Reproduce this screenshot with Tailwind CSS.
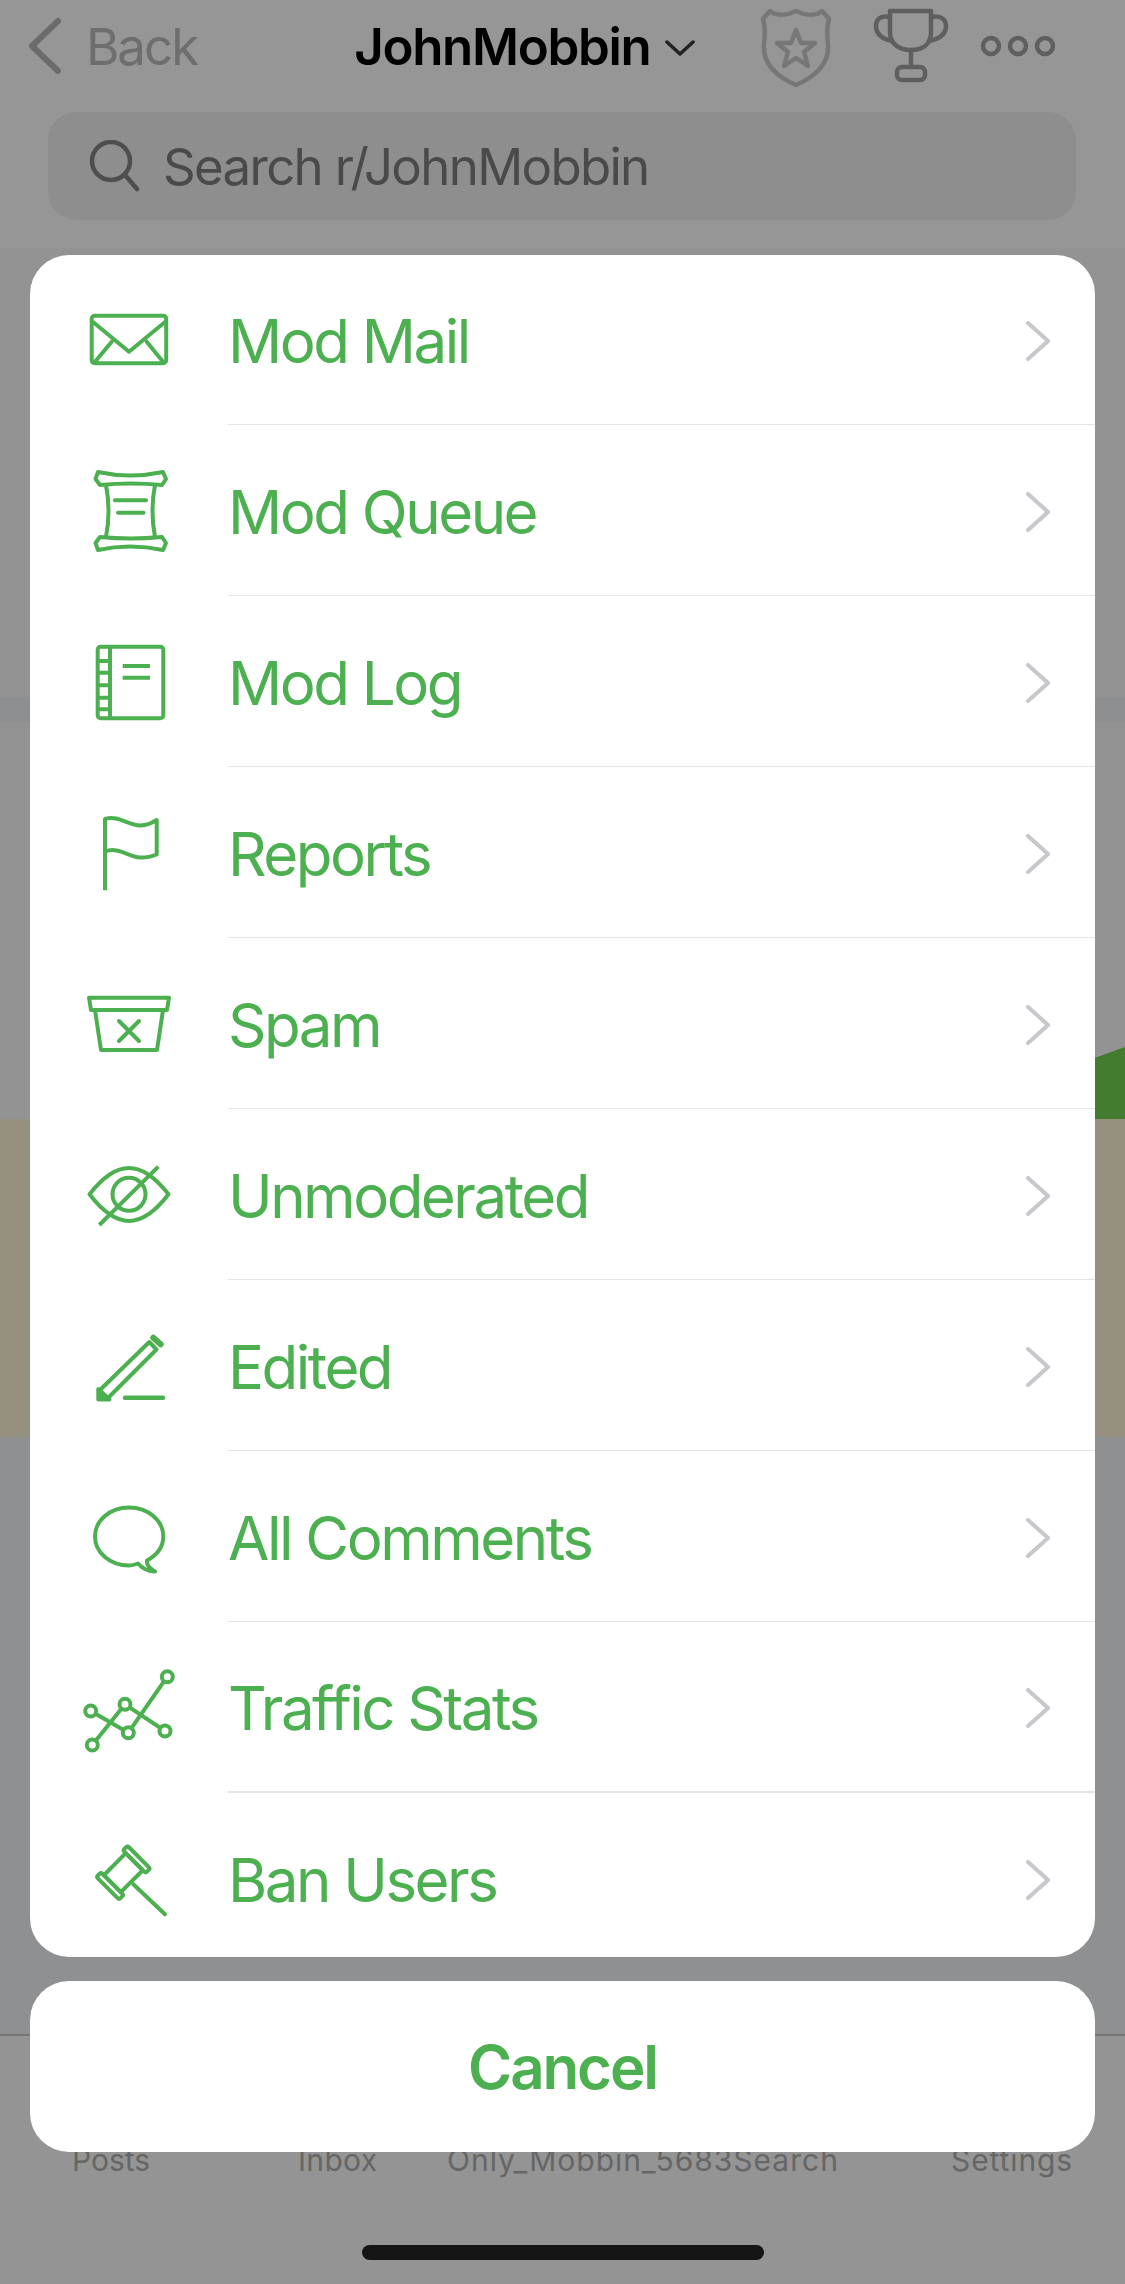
<!DOCTYPE html>
<html lang="en">
<head>
    <meta charset="UTF-8">
    <meta name="viewport" content="width=device-width, initial-scale=1.0">
    <title>JohnMobbin</title>
    <script src="https://cdn.jsdelivr.net/npm/@tailwindcss/browser@4"></script>
</head>
<body class="relative w-[1125px] h-[2284px] overflow-hidden bg-[#949494] font-['Inter','Liberation_Sans',sans-serif]">

    <!-- dimmed page behind the sheet -->
    <header class="h-[248px] bg-[#969696]">
        <div class="flex items-center h-[92px]">
            <svg class="ml-[25px] w-[38px] h-[60px]" viewBox="0 0 38 60" fill="none" stroke="#6b6b6b" stroke-width="6" stroke-linecap="round" stroke-linejoin="round">
                <path d="M33 5 L7 30 L33 55"/>
            </svg>
            <span class="ml-[23px] text-[51px] leading-none tracking-[-2px] text-[#6e6e6e]">Back</span>
            <span class="ml-[157px] text-[51px] leading-none font-semibold tracking-[-1.3px] text-black">JohnMobbin</span>
            <svg class="ml-[15px] mt-[4px] w-[30px] h-[16px]" viewBox="0 0 30 16" fill="none" stroke="#222" stroke-width="3.5" stroke-linecap="round" stroke-linejoin="round">
                <path d="M2 2 L15 14 L28 2"/>
            </svg>
            <svg class="ml-[65px] mt-[3px] w-[72px] h-[80px]" viewBox="0 0 72 80" fill="none" stroke="#777" stroke-width="4.5" stroke-linejoin="round">
                <path d="M10 3 C16 8 25 8 36 3 C47 8 56 8 62 3 L69 11 C66 20 67 28 68 36 C70 58 52 70 36 77 C20 70 2 58 4 36 C5 28 6 20 3 11 Z"/>
                <path d="M36 22 L41 35 L55 35 L44 44 L48 58 L36 50 L24 58 L28 44 L17 35 L31 35 Z"/>
            </svg>
            <svg class="ml-[41px] w-[76px] h-[76px]" viewBox="0 0 76 76" fill="none" stroke="#5f5f5f" stroke-width="4.5" stroke-linecap="round" stroke-linejoin="round">
                <path d="M17 3 H58 V24 C58 36 50 42 38 42 C26 42 17 36 17 24 Z"/>
                <path d="M17 9 C8 7 3 11 3 18 C3 27 10 31 19 33"/>
                <path d="M58 9 C67 7 73 11 73 18 C73 27 66 31 56 33"/>
                <path d="M38 42 V58"/>
                <rect x="24" y="59" width="28" height="13" rx="5"/>
            </svg>
            <svg class="ml-[31px] w-[76px] h-[24px]" viewBox="0 0 76 24" fill="none" stroke="#5f5f5f" stroke-width="4.5">
                <circle cx="11" cy="12" r="8"/>
                <circle cx="38" cy="12" r="8"/>
                <circle cx="65" cy="12" r="8"/>
            </svg>
        </div>
        <div class="flex items-center mt-[20px] ml-[48px] w-[1028px] h-[108px] rounded-[28px] bg-[#8e8e8e]">
            <svg class="ml-[41px] w-[52px] h-[52px]" viewBox="0 0 52 52" fill="none" stroke="#4e4e4e" stroke-width="4.5" stroke-linecap="round">
                <circle cx="22" cy="21" r="19"/>
                <path d="M36 35 L48 49"/>
            </svg>
            <span class="ml-[22px] text-[51px] leading-none tracking-[-1.7px] text-[#4a4a4a]">Search r/JohnMobbin</span>
        </div>
    </header>

    <section class="h-[449px] bg-[#939393]"></section>
    <div class="h-[25px] bg-[#8d8f90]"></div>
    <section class="relative h-[397px] bg-[#939393]">
        <div class="absolute right-0 bottom-0 w-[200px] h-[100px] bg-[#437c2f] [clip-path:polygon(100%_28%,0_100%,100%_100%)]"></div>
    </section>
    <section class="h-[318px] bg-[#96917f]"></section>
    <section class="h-[597px] bg-[#8e9091]"></section>

    <footer class="h-[250px] border-t-2 border-[#777] bg-[#949494]">
        <div class="relative flex pt-[106px] text-[30px] leading-[36px] text-[#666]">
            <span class="ml-[72px] w-[226px]">Posts</span>
            <span class="w-[149px] tracking-[0.3px]">Inbox</span>
            <span class="w-[504px] tracking-[1px]">Only_Mobbin_5683Search</span>
            <span class="tracking-[0.9px]">Settings</span>
        </div>
    </footer>

    <!-- home indicator -->
    <div class="absolute left-[362px] top-[2245px] w-[402px] h-[15px] rounded-full bg-[#141414]"></div>

    <!-- action sheet -->
    <div class="absolute inset-0 flex flex-col gap-[24px] px-[30px] pt-[255px]">
        <div class="h-[1702px] rounded-[39px] bg-white overflow-hidden text-[60px] leading-none tracking-[-2.5px] text-[#4caf50]">

            <div class="flex h-[170px]">
                <svg class="ml-[50px] mr-[48px] self-center w-[100px] h-[100px]" viewBox="0 0 100 100" fill="none" stroke="#4caf50" stroke-width="4" stroke-linecap="round" stroke-linejoin="round">
                    <rect x="11.7" y="25.7" width="74.5" height="47.5" rx="3"/>
                    <path d="M13 32 L49 61.7 L85 32"/>
                    <path d="M31.7 51.7 L15 71.7"/>
                    <path d="M66.7 51.7 L83 71.7"/>
                </svg>
                <div class="flex flex-1 items-center justify-between pt-[3px] pr-[45px] border-b border-[#e4e4e6]">
                    <span>Mod Mail</span>
                    <svg class="w-[24px] h-[40px]" viewBox="0 0 24 40" fill="none" stroke="#c7c7cc" stroke-width="4" stroke-linecap="round"><path d="M2 2 L22 20 L2 38"/></svg>
                </div>
            </div>

            <div class="flex h-[171px]">
                <svg class="ml-[50px] mr-[48px] self-center w-[100px] h-[100px]" viewBox="0 0 100 100" fill="none" stroke="#4caf50" stroke-width="4" stroke-linecap="round" stroke-linejoin="round">
                    <path d="M18 11 Q50 18 83 11 L86 18 L82 24 Q50 21 20 24 L15.5 18 Z"/>
                    <path d="M18 89 Q50 82 83 89 L86 82 L82 76 Q50 79 20 76 L15.5 82 Z"/>
                    <path d="M26 24 Q31 50 26 76"/>
                    <path d="M75 24 Q70 50 75 76"/>
                    <path d="M35 39.3 H66"/>
                    <path d="M38 51.7 H63.5"/>
                </svg>
                <div class="flex flex-1 items-center justify-between pt-[3px] pr-[45px] border-b border-[#e4e4e6]">
                    <span>Mod Queue</span>
                    <svg class="w-[24px] h-[40px]" viewBox="0 0 24 40" fill="none" stroke="#c7c7cc" stroke-width="4" stroke-linecap="round"><path d="M2 2 L22 20 L2 38"/></svg>
                </div>
            </div>

            <div class="flex h-[171px]">
                <svg class="ml-[50px] mr-[48px] self-center w-[100px] h-[100px]" viewBox="0 0 100 100" fill="none" stroke="#4caf50" stroke-width="4" stroke-linejoin="round">
                    <rect x="17.7" y="14.7" width="65.6" height="71.6" rx="3"/>
                    <path d="M30 14.7 V86.3"/>
                    <path d="M18 29 H30 M18 40.7 H30 M18 53.3 H30 M18 65.7 H30 M18 77.3 H30"/>
                    <path d="M42.7 34 H70 M42.7 45.7 H70"/>
                </svg>
                <div class="flex flex-1 items-center justify-between pt-[3px] pr-[45px] border-b border-[#e4e4e6]">
                    <span>Mod Log</span>
                    <svg class="w-[24px] h-[40px]" viewBox="0 0 24 40" fill="none" stroke="#c7c7cc" stroke-width="4" stroke-linecap="round"><path d="M2 2 L22 20 L2 38"/></svg>
                </div>
            </div>

            <div class="flex h-[171px]">
                <svg class="ml-[50px] mr-[48px] self-center w-[100px] h-[100px]" viewBox="0 0 100 100" fill="none" stroke="#4caf50" stroke-width="4" stroke-linejoin="round">
                    <path d="M25 87.3 V16 C38 12 48 22 60 22.5 C66 22.5 72 20 76.7 17 V51.5 C70 54 66 55 60 54.5 C48 53.5 38 43.5 25 48.5"/>
                </svg>
                <div class="flex flex-1 items-center justify-between pt-[3px] pr-[45px] border-b border-[#e4e4e6]">
                    <span>Reports</span>
                    <svg class="w-[24px] h-[40px]" viewBox="0 0 24 40" fill="none" stroke="#c7c7cc" stroke-width="4" stroke-linecap="round"><path d="M2 2 L22 20 L2 38"/></svg>
                </div>
            </div>

            <div class="flex h-[171px]">
                <svg class="ml-[50px] mr-[48px] self-center w-[100px] h-[100px]" viewBox="0 0 100 100" fill="none" stroke="#4caf50" stroke-width="4" stroke-linecap="round" stroke-linejoin="round">
                    <path d="M9 23.7 H89 L87 36 H11 Z"/>
                    <path d="M15 36 L21 76 H77 L83 36"/>
                    <path d="M39 47 L59 67 M59 47 L39 67"/>
                </svg>
                <div class="flex flex-1 items-center justify-between pt-[3px] pr-[45px] border-b border-[#e4e4e6]">
                    <span>Spam</span>
                    <svg class="w-[24px] h-[40px]" viewBox="0 0 24 40" fill="none" stroke="#c7c7cc" stroke-width="4" stroke-linecap="round"><path d="M2 2 L22 20 L2 38"/></svg>
                </div>
            </div>

            <div class="flex h-[171px]">
                <svg class="ml-[50px] mr-[48px] self-center w-[100px] h-[100px]" viewBox="0 0 100 100" fill="none" stroke="#4caf50" stroke-width="4" stroke-linejoin="round">
                    <path d="M9.5 49.3 Q30 23 49 23 Q68 23 88.5 49.3 Q68 76 49 76 Q30 76 9.5 49.3 Z"/>
                    <circle cx="49" cy="49.3" r="16.5"/>
                    <path d="M19.3 80 L78.3 21.7"/>
                </svg>
                <div class="flex flex-1 items-center justify-between pt-[3px] pr-[45px] border-b border-[#e4e4e6]">
                    <span>Unmoderated</span>
                    <svg class="w-[24px] h-[40px]" viewBox="0 0 24 40" fill="none" stroke="#c7c7cc" stroke-width="4" stroke-linecap="round"><path d="M2 2 L22 20 L2 38"/></svg>
                </div>
            </div>

            <div class="flex h-[171px]">
                <svg class="ml-[50px] mr-[48px] self-center w-[100px] h-[100px]" viewBox="0 0 100 100" fill="none" stroke="#4caf50" stroke-width="4" stroke-linejoin="round">
                    <path d="M20 74 L69.3 26 L76.5 33.5 L28 82 L20 82 Z"/>
                    <path d="M18.3 73 L18.3 83.5 L29.5 83.5 Z" fill="#4caf50"/>
                    <path d="M73.3 21.7 L80.7 28.3" stroke-width="6" stroke-linecap="round"/>
                    <path d="M45 81.7 H83" stroke-width="4.5" stroke-linecap="round"/>
                </svg>
                <div class="flex flex-1 items-center justify-between pt-[3px] pr-[45px] border-b border-[#e4e4e6]">
                    <span>Edited</span>
                    <svg class="w-[24px] h-[40px]" viewBox="0 0 24 40" fill="none" stroke="#c7c7cc" stroke-width="4" stroke-linecap="round"><path d="M2 2 L22 20 L2 38"/></svg>
                </div>
            </div>

            <div class="flex h-[171px]">
                <svg class="ml-[50px] mr-[48px] self-center w-[100px] h-[100px]" viewBox="0 0 100 100" fill="none" stroke="#4caf50" stroke-width="4" stroke-linejoin="round">
                    <path d="M58 76.5 C54 78 52 78.5 49 78.5 C30 78.5 15 65.5 15 49.5 C15 33.5 30 20.5 49 20.5 C68 20.5 83.3 33.5 83.3 49.5 C83.3 59.5 77 68 67 73.5 C66 78 69 81 75 84.5 C68 84.5 62 81 58 76.5 Z"/>
                </svg>
                <div class="flex flex-1 items-center justify-between pt-[3px] pr-[45px] border-b border-[#e4e4e6]">
                    <span>All Comments</span>
                    <svg class="w-[24px] h-[40px]" viewBox="0 0 24 40" fill="none" stroke="#c7c7cc" stroke-width="4" stroke-linecap="round"><path d="M2 2 L22 20 L2 38"/></svg>
                </div>
            </div>

            <div class="flex h-[171px]">
                <svg class="ml-[50px] mr-[48px] self-center w-[100px] h-[100px]" viewBox="0 0 100 100" fill="none" stroke="#4caf50" stroke-width="4" stroke-linecap="round" stroke-linejoin="round">
                    <path d="M10.7 53 L48.3 74.7 L87.3 18.7"/>
                    <path d="M12.3 87 L45 46.3 L85 73"/>
                    <circle cx="87.3" cy="18.7" r="5.5" fill="white"/>
                    <circle cx="45" cy="46.3" r="5.5" fill="white"/>
                    <circle cx="10.7" cy="53" r="5.5" fill="white"/>
                    <circle cx="48.3" cy="74.7" r="5.5" fill="white"/>
                    <circle cx="85" cy="73" r="5.5" fill="white"/>
                    <circle cx="12.3" cy="87" r="5.5" fill="white"/>
                </svg>
                <div class="flex flex-1 items-center justify-between pt-[3px] pr-[45px] border-b-2 border-[#e4e4e6]">
                    <span>Traffic Stats</span>
                    <svg class="w-[24px] h-[40px]" viewBox="0 0 24 40" fill="none" stroke="#c7c7cc" stroke-width="4" stroke-linecap="round"><path d="M2 2 L22 20 L2 38"/></svg>
                </div>
            </div>

            <div class="flex h-[171px]">
                <svg class="ml-[50px] mr-[48px] self-center w-[100px] h-[100px]" viewBox="0 0 100 100" fill="none" stroke="#4caf50" stroke-width="4" stroke-linecap="round" stroke-linejoin="round">
                    <g transform="rotate(45 43.3 43.7)">
                        <rect x="27.3" y="21.7" width="32" height="6.5" rx="2"/>
                        <rect x="27.3" y="59.2" width="32" height="6.5" rx="2"/>
                        <rect x="31.3" y="28.2" width="24" height="31"/>
                    </g>
                    <path d="M53.3 55.3 L85 85.3"/>
                </svg>
                <div class="flex flex-1 items-center justify-between pt-[3px] pr-[45px]">
                    <span>Ban Users</span>
                    <svg class="w-[24px] h-[40px]" viewBox="0 0 24 40" fill="none" stroke="#c7c7cc" stroke-width="4" stroke-linecap="round"><path d="M2 2 L22 20 L2 38"/></svg>
                </div>
            </div>
        </div>

        <button class="h-[171px] rounded-[39px] bg-white text-[60px] leading-none font-semibold tracking-[-2.1px] text-[#4caf50]">Cancel</button>
    </div>
</body>
</html>
